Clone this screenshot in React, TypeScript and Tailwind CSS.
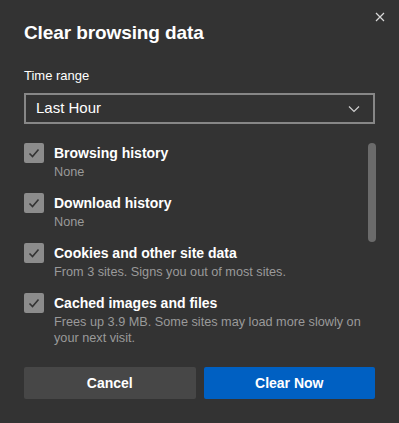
import React from 'react'

const items = [
  { title: 'Browsing history', desc: 'None' },
  { title: 'Download history', desc: 'None' },
  { title: 'Cookies and other site data', desc: 'From 3 sites. Signs you out of most sites.' },
  { title: 'Cached images and files', desc: 'Frees up 3.9 MB. Some sites may load more slowly on your next visit.' },
]

function Check() {
  return (
    <div className="w-5 h-5 shrink-0 rounded-[2px] bg-[#8c8c8c] flex items-center justify-center">
      <svg width="14" height="14" viewBox="0 0 14 14" fill="none">
        <path d="M2.5 7.5 L5.5 10.5 L11.5 3.5" stroke="#333333" strokeWidth="1.6" />
      </svg>
    </div>
  )
}

export default function App() {
  return (
    <div className="relative w-[399px] h-[423px] bg-[#333333] text-white font-['Liberation_Sans',Arial,sans-serif] overflow-hidden">
      {/* Close */}
      <button className="absolute top-[12px] right-[14px] w-[10px] h-[10px] flex items-center justify-center">
        <svg width="10" height="10" viewBox="0 0 10 10">
          <path d="M1 1 L9 9 M9 1 L1 9" stroke="#d8d8d8" strokeWidth="1.2" />
        </svg>
      </button>

      <div className="px-6 pt-[22px]">
        <h1 className="text-[19px] leading-[22px] font-bold tracking-[-0.1px]">Clear browsing data</h1>

        <p className="mt-[24px] text-[13px] leading-[16px]">Time range</p>

        <div className="mt-[9px] h-[31px] border-2 border-[#878787] flex items-center justify-between pl-[10px] pr-[13px]">
          <span className="text-[15px]">Last Hour</span>
          <svg width="12" height="8" viewBox="0 0 12 8" fill="none">
            <path d="M1 1.5 L6 6.5 L11 1.5" stroke="#d0d0d0" strokeWidth="1.2" />
          </svg>
        </div>

        {/* Options list with overlay scrollbar */}
        <div className="relative mt-[19px] h-[208px] pr-[12px]">
          <div className="flex flex-col gap-[13px]">
            {items.map(it => (
              <div key={it.title} className="flex gap-[10px]">
                <Check />
                <div className="flex flex-col pt-[2px]">
                  <span className="text-[14px] leading-[17px] font-bold">{it.title}</span>
                  <span className="text-[12.7px] leading-[16px] text-[#9a9a9a] mt-[2px]">{it.desc}</span>
                </div>
              </div>
            ))}
          </div>
          <div className="absolute top-0 right-[-1px] w-2 h-[99px] rounded-full bg-[#6b6b6b]" />
        </div>

        {/* Buttons */}
        <div className="mt-[16px] grid grid-cols-2 gap-2">
          <button className="h-8 rounded-[2px] bg-[#474747] text-[14px] font-bold">Cancel</button>
          <button className="h-8 rounded-[2px] bg-[#0060c2] text-[14px] font-bold">Clear Now</button>
        </div>
      </div>
    </div>
  )
}
